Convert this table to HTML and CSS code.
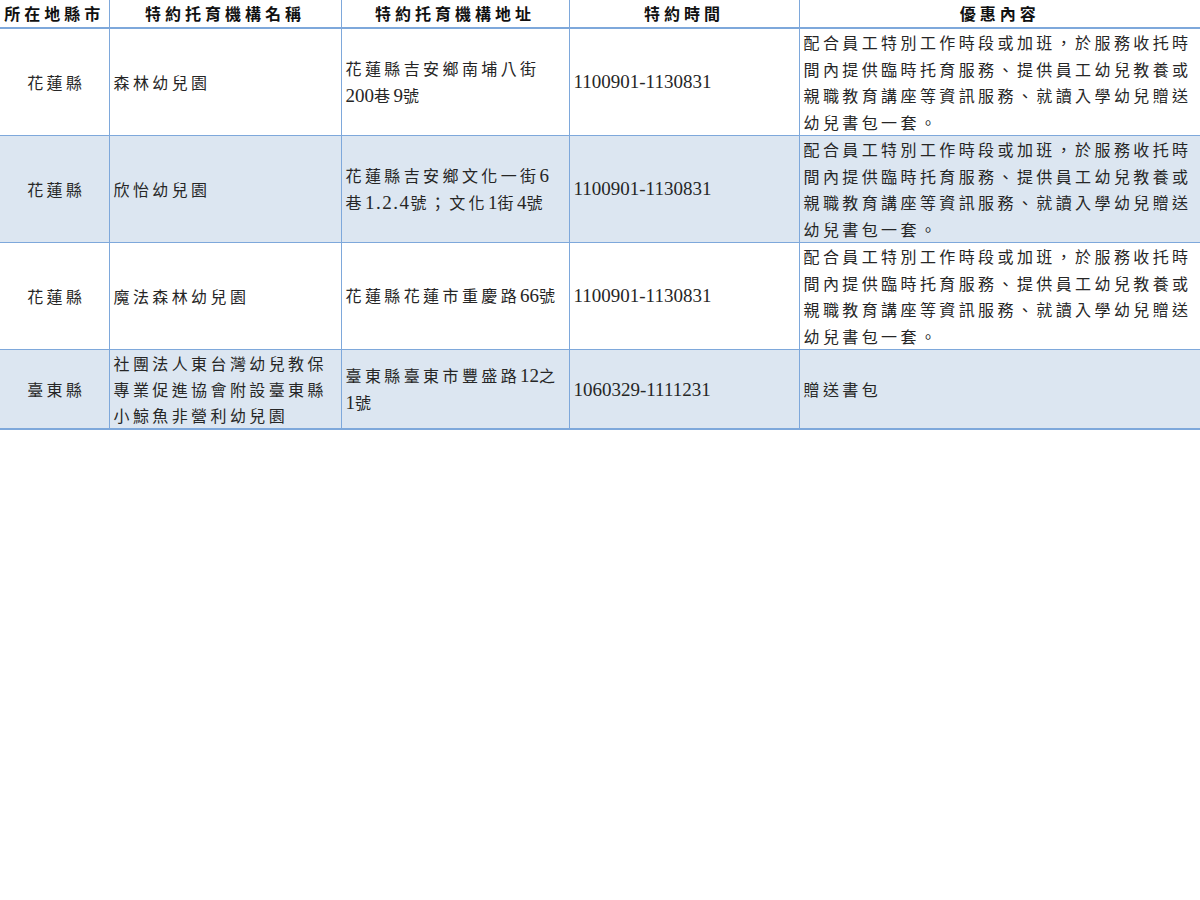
FILE: index.html
```html
<!DOCTYPE html>
<html lang="zh-Hant">
<head>
<meta charset="utf-8">
<title>特約托育機構</title>
<link rel="stylesheet" href="styles.css">
</head>
<body>
<table class="grid">
  <colgroup>
    <col class="c1"><col class="c2"><col class="c3"><col class="c4"><col class="c5">
  </colgroup>
  <thead>
    <tr class="head">
      <th>所在地縣市</th>
      <th>特約托育機構名稱</th>
      <th>特約托育機構地址</th>
      <th>特約時間</th>
      <th>優惠內容</th>
    </tr>
  </thead>
  <tbody>
    <tr class="row">
      <td class="city">花蓮縣</td>
      <td>森林幼兒園</td>
      <td>花蓮縣吉安鄉南埔八街<span class="num">200</span>巷<span class="num">9</span>號</td>
      <td><span class="num">1100901-1130831</span></td>
      <td>配合員工特別工作時段或加班，於服務收托時間內提供臨時托育服務、提供員工幼兒教養或親職教育講座等資訊服務、就讀入學幼兒贈送幼兒書包一套。</td>
    </tr>
    <tr class="row alt">
      <td class="city">花蓮縣</td>
      <td>欣怡幼兒園</td>
      <td>花蓮縣吉安鄉文化一街<span class="num">6</span>巷<span class="num dots">1.2.4</span>號；文化<span class="num">1</span>街<span class="num">4</span>號</td>
      <td><span class="num">1100901-1130831</span></td>
      <td>配合員工特別工作時段或加班，於服務收托時間內提供臨時托育服務、提供員工幼兒教養或親職教育講座等資訊服務、就讀入學幼兒贈送幼兒書包一套。</td>
    </tr>
    <tr class="row">
      <td class="city">花蓮縣</td>
      <td>魔法森林幼兒園</td>
      <td>花蓮縣花蓮市重慶路<span class="num">66</span>號</td>
      <td><span class="num">1100901-1130831</span></td>
      <td>配合員工特別工作時段或加班，於服務收托時間內提供臨時托育服務、提供員工幼兒教養或親職教育講座等資訊服務、就讀入學幼兒贈送幼兒書包一套。</td>
    </tr>
    <tr class="row alt last">
      <td class="city">臺東縣</td>
      <td>社團法人東台灣幼兒教保專業促進協會附設臺東縣小鯨魚非營利幼兒園</td>
      <td>臺東縣臺東市豐盛路<span class="num">12</span>之<span class="num">1</span>號</td>
      <td><span class="num">1060329-1111231</span></td>
      <td>贈送書包</td>
    </tr>
  </tbody>
</table>
</body>
</html>
```
FILE: styles.css
```css
html, body {
  margin: 0;
  padding: 0;
  background: #ffffff;
}

.grid {
  border-collapse: collapse;
  table-layout: fixed;
  width: 1200px;
  font-family: "Noto Sans CJK TC", "Liberation Serif", serif;
  color: #262626;
}

.c1 { width: 109px; }
.c2 { width: 232px; }
.c3 { width: 228px; }
.c4 { width: 230px; }
.c5 { width: 401px; }

.grid th,
.grid td {
  border: 1px solid #7ea8db;
  padding: 0 4px;
  vertical-align: middle;
  text-align: left;
  font-size: 16px;
  letter-spacing: 3.4px;
  line-height: 26.5px;
  font-weight: 400;
}

.grid tr > :first-child { border-left: none; }
.grid tr > :last-child { border-right: none; }

.head th {
  border-top: none;
  border-bottom: 2px solid #7ea8db;
  height: 27px;
  padding: 0 2px;
  text-align: center;
  font-weight: 700;
  letter-spacing: 4px;
  color: #111111;
  line-height: 27px;
}

.row td { height: 105px; }
.row.last td {
  height: 76px;
  line-height: 26px;
  border-bottom: 2px solid #7ea8db;
}

.alt td { background: #dce6f1; }

.grid td.city {
  text-align: center;
  padding-left: 8px;
}

.num {
  font-family: "Liberation Serif", serif;
  font-size: 19px;
  letter-spacing: 0;
}

.dots { letter-spacing: 1.5px; }
```
